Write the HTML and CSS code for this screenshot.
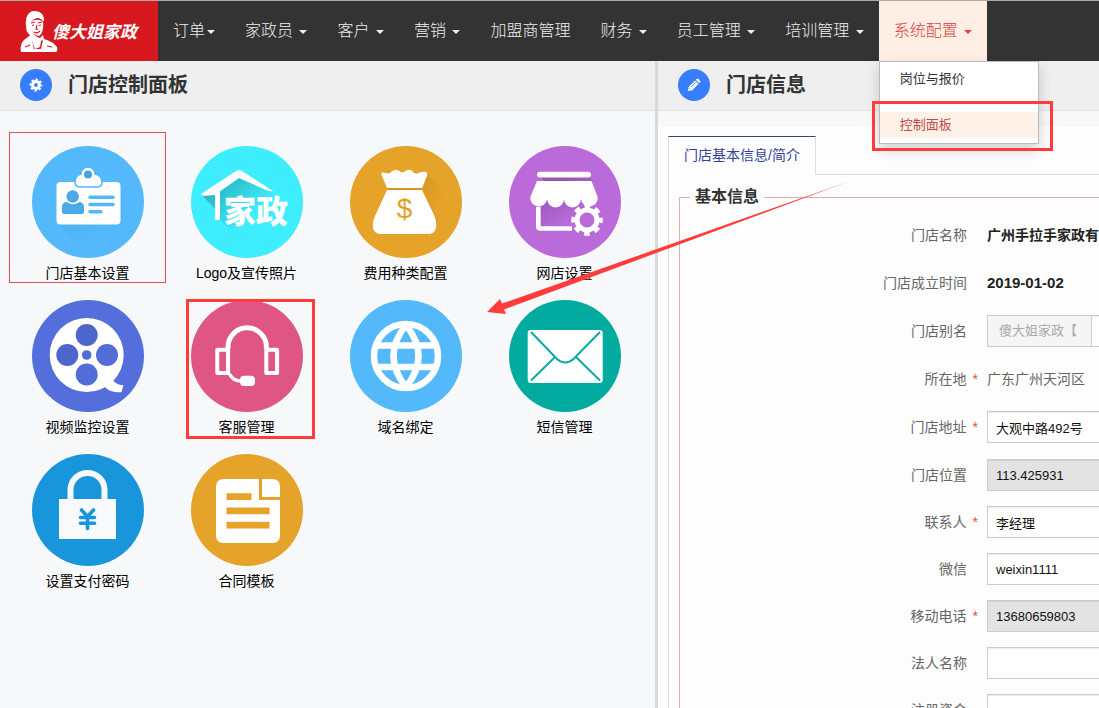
FILE: index.html
```html
<!DOCTYPE html>
<html lang="zh-CN">
<head>
<meta charset="utf-8">
<title>门店控制面板</title>
<link rel="stylesheet" href="styles.css">
</head>
<body>
<header class="navbar">
  <a class="brand" href="#">
    <svg class="brand-face" viewBox="0 0 38 42" aria-hidden="true">
      <path fill="#fff" d="M6 16C5 8 8 1 14 1c6 0 10 3 10 9l-1 2c-1-3-3-4-6-4-3 1-5 2-6 5l1 7c1 4 4 7 8 8l3-3 1 4c5 2 9 3 11 6 3 2 3 6 1 7H1c-1-4 0-9 3-12 2-2 5-3 6-5-3-2-4-5-4-9z"/>
      <path fill="#fff" d="M11 12c3-3 9-3 12 0 1 5 0 11-4 14-4 0-7-4-8-8z"/>
      <path fill="none" stroke="#d7191f" stroke-width="1.2" d="M11 13l4-1M18 13l4-1M12 15.500l2-.5M19 15.500l2-.5M17 15l-1 4 2 .5M14 22q3 2 6-1M24 11q1 5-1 10M5 37l5-2M27 36l5 1"/>
      <path fill="#d7191f" d="M12 30l3 9 5-2 1-6 2-1-2 9h-7z"/>
    </svg>
    <span class="brand-name">傻大姐家政</span>
  </a>
  <nav class="menu">
    <a class="menu-link" href="#">订单<span class="caret"></span></a>
    <a class="menu-link" href="#">家政员 <span class="caret"></span></a>
    <a class="menu-link" href="#">客户 <span class="caret"></span></a>
    <a class="menu-link" href="#">营销 <span class="caret"></span></a>
    <a class="menu-link" href="#">加盟商管理</a>
    <a class="menu-link" href="#">财务 <span class="caret"></span></a>
    <a class="menu-link" href="#">员工管理 <span class="caret"></span></a>
    <a class="menu-link" href="#">培训管理 <span class="caret"></span></a>
    <div class="menu-group">
      <a class="menu-link menu-link-open" href="#">系统配置 <span class="caret"></span></a>
      <div class="dropdown">
        <a class="dropdown-link" href="#">岗位与报价</a>
        <a class="dropdown-link dropdown-link-active" href="#">控制面板</a>
        <span class="mark mark-dropdown"></span>
      </div>
    </div>
  </nav>
</header>

<main class="panels">
  <section class="panel panel-board">
    <header class="panel-head">
      <span class="panel-icon">
        <svg width="14" height="14" viewBox="0 0 14 14" aria-hidden="true">
          <g fill="none" stroke="#fff"><circle cx="7" cy="7" r="3.400" stroke-width="3"/><circle cx="7" cy="7" r="5.200" stroke-width="2.400" stroke-dasharray="2.300 1.784" stroke-dashoffset="1.100"/></g>
        </svg>
      </span>
      <h1 class="panel-title">门店控制面板</h1>
    </header>
    <div class="tiles">
      <a class="tile tile-current" href="#">
        <svg class="tile-icon" viewBox="0 0 112 112" aria-hidden="true">
          <defs><linearGradient id="shade-card" x1="0" y1="0" x2="1" y2="1"><stop offset="0.300" stop-color="#3f9fdc"/><stop offset="0.800" stop-color="#53b9fb"/></linearGradient></defs>
          <circle cx="56" cy="56" r="56" fill="#53b9fb"/>
          <path d="M26 78l20 20 25-19z" fill="url(#shade-card)" opacity=".15"/>
          <rect x="24.500" y="36" width="64" height="42.500" rx="4" fill="#fff"/>
          <path d="M56 21a7 7 0 0 0-7 7c-4 1-6 4-6 8 0 3 2 5 5 5h17c3 0 5-2 5-5 0-4-3-7-7-8a7 7 0 0 0-7-7z" fill="#fff" stroke="#53b9fb" stroke-width="1.600"/>
          <circle cx="56" cy="28.500" r="4" fill="#45a3dd"/>
          <circle cx="40.700" cy="50.500" r="6.200" fill="#4aaae6"/>
          <path d="M30 66v-5c0-3 2-5 5-5 4 3 8 3 12 0 3 0 5 2 5 5v5q0 2-2 2H32q-2 0-2-2z" fill="#4aaae6"/>
          <path d="M58 51.300h23M58 58.500h23M58 65.800h11" stroke="#53b9fb" stroke-width="3.500" stroke-linecap="round"/>
        </svg>
        <span class="tile-label">门店基本设置</span>
      </a>
      <a class="tile" href="#">
        <svg class="tile-icon" viewBox="0 0 112 112" aria-hidden="true">
          <defs><linearGradient id="shade-roof" gradientUnits="userSpaceOnUse" x1="30" y1="35" x2="62" y2="70"><stop offset="0" stop-color="#2bb5c2"/><stop offset="1" stop-color="#3eeeff"/></linearGradient></defs>
          <circle cx="56" cy="56" r="56" fill="#3eeeff"/>
          <path d="M11 49h13v14zM29 46l19-14 34 14-28 50-25-22z" fill="url(#shade-roof)"/>
          <path d="M10 48l35-23q3-2 6 0l31 20q-2 1-7-1L48 32 29 45v29h-5V49l-12 1z" fill="#fff"/>
          <text class="house-text" x="33" y="77">家政</text>
        </svg>
        <span class="tile-label">Logo及宣传照片</span>
      </a>
      <a class="tile" href="#">
        <svg class="tile-icon" viewBox="0 0 112 112" aria-hidden="true">
          <defs><linearGradient id="shade-bag" gradientUnits="userSpaceOnUse" x1="60" y1="40" x2="92" y2="56"><stop offset="0" stop-color="#c98a1c"/><stop offset="1" stop-color="#e5a329"/></linearGradient></defs>
          <circle cx="56" cy="56" r="56" fill="#e5a329"/>
          <path d="M77 28l20 19-10 30-14-33z" fill="url(#shade-bag)" opacity=".6"/>
          <path d="M32 30c-2-4 1-4 4-3 4 2 6-3 9-3 4-1 5 4 9 2 4-3 7-3 9 0 3 3 5 1 8 0 5-1 7 0 6 4l-5 12H37z" fill="#fff"/>
          <path d="M37 44h35l12 25c4 10 3 19-6 19H31c-9 0-10-9-6-18z" fill="#fff"/>
          <path d="M37 43h35" stroke="#c48a20"/>
          <text class="dollar-text" x="54.500" y="72">$</text>
        </svg>
        <span class="tile-label">费用种类配置</span>
      </a>
      <a class="tile" href="#">
        <svg class="tile-icon" viewBox="0 0 112 112" aria-hidden="true">
          <defs><linearGradient id="shade-shop" gradientUnits="userSpaceOnUse" x1="40" y1="40" x2="62" y2="75"><stop offset="0" stop-color="#9455b3"/><stop offset="1" stop-color="#bb6bd9"/></linearGradient></defs>
          <circle cx="56" cy="56" r="56" fill="#bb6bd9"/>
          <path d="M32 31h50l3 10H40zM32 50h50l-18 30H32z" fill="url(#shade-shop)"/>
          <rect x="28" y="25.700" width="54" height="5.800" rx="2.900" fill="#fff"/>
          <path d="M28 35h54.500l6.200 16a8.400 8.400 0 0 1-16.800 2 8.400 8.400 0 0 1-16.900 0 8.400 8.400 0 0 1-16.900 0 8.400 8.400 0 0 1-16.800-2z" fill="#fff"/>
          <path d="M29.300 61v19.500q0 2 2 2H63" fill="none" stroke="#fff" stroke-width="4.600"/>
          <circle cx="78" cy="74" r="10" fill="none" stroke="#fff" stroke-width="5"/>
          <circle cx="78" cy="74" r="13.500" fill="none" stroke="#fff" stroke-width="4.500" stroke-dasharray="5.600 5" stroke-dashoffset="2.800"/>
        </svg>
        <span class="tile-label">网店设置</span>
      </a>
      <a class="tile" href="#">
        <svg class="tile-icon" viewBox="0 0 112 112" aria-hidden="true">
          <circle cx="56" cy="56" r="56" fill="#546fdb"/>
          <circle cx="54.700" cy="55" r="37" fill="#fff"/>
          <path d="M72 86c4 5 10 7 17.500 6l2-7c-5 0-9-2-11-6z" fill="#fff"/>
          <g fill="#4c66cb"><circle cx="54.700" cy="35" r="11"/><circle cx="35.300" cy="55" r="11"/></g>
          <g fill="#526cd8"><circle cx="75" cy="55" r="11"/><circle cx="54.700" cy="74.500" r="11"/><circle cx="54.700" cy="55" r="4.800"/></g>
        </svg>
        <span class="tile-label">视频监控设置</span>
      </a>
      <a class="tile" href="#">
        <svg class="tile-icon" viewBox="0 0 112 112" aria-hidden="true">
          <circle cx="56" cy="56" r="56" fill="#df5584"/>
          <g fill="none" stroke="#fff">
            <path d="M37 49v-2a19.200 19.200 0 0 1 38.400 0v2" stroke-width="5"/>
            <path d="M26.300 49.700h10.800v23.300H26.300zM75.300 49.700h10.800v23.300H75.300z" stroke-width="4" stroke-linejoin="round"/>
            <path d="M38.500 74c2 4 6 7 12 7" stroke-width="3.500"/>
          </g>
          <rect x="49" y="75.700" width="15" height="10.200" rx="4" fill="#fff"/>
        </svg>
        <span class="tile-label">客服管理</span>
        <span class="mark mark-tile"></span>
      </a>
      <a class="tile" href="#">
        <svg class="tile-icon" viewBox="0 0 112 112" aria-hidden="true">
          <circle cx="56" cy="56" r="56" fill="#53b9fb"/>
          <g fill="none" stroke="#fff" stroke-width="6.500">
            <circle cx="56" cy="56" r="32"/>
            <path d="M56 25Q31 56 56 87M56 25Q81 56 56 87M27 45.500h58M27 67h58"/>
          </g>
        </svg>
        <span class="tile-label">域名绑定</span>
      </a>
      <a class="tile" href="#">
        <svg class="tile-icon" viewBox="0 0 112 112" aria-hidden="true">
          <circle cx="56" cy="56" r="56" fill="#01ab9f"/>
          <rect x="18.700" y="30" width="75" height="53" rx="3" fill="#fff"/>
          <path d="M22 32l26 27q8 7 16.500 0L91 32M22 80.500l24-23.500M91 80.500L67 57" fill="none" stroke="#01ab9f" stroke-width="1.900"/>
        </svg>
        <span class="tile-label">短信管理</span>
      </a>
      <a class="tile" href="#">
        <svg class="tile-icon" viewBox="0 0 112 112" aria-hidden="true">
          <circle cx="56" cy="56" r="56" fill="#1996db"/>
          <path d="M27 45h57v40H27z" fill="#f7f9fb"/>
          <path d="M38.500 46V36a17 17 0 0 1 34 0v10" fill="none" stroke="#f7f9fb" stroke-width="6"/>
          <path d="M49.500 56l6 6.500 6-6.500M55.500 62v12.500M48.500 63.500h14M48.500 69.300h14" fill="none" stroke="#1996db" stroke-width="3.600" stroke-linecap="round"/>
        </svg>
        <span class="tile-label">设置支付密码</span>
      </a>
      <a class="tile" href="#">
        <svg class="tile-icon" viewBox="0 0 112 112" aria-hidden="true">
          <circle cx="56" cy="56" r="56" fill="#e5a329"/>
          <rect x="25" y="25" width="64" height="64" rx="7" fill="#fff"/>
          <path d="M35.500 39.300h25V46h-25zM35.500 53.500h43v6.700h-43zM35.500 67.800h43v6.700h-43zM68 25h3v18h18v3H68z" fill="#e5a329"/>
        </svg>
        <span class="tile-label">合同模板</span>
      </a>
    </div>
  </section>

  <section class="panel panel-info">
    <header class="panel-head">
      <span class="panel-icon">
        <svg width="14" height="14" viewBox="0 0 14 14" aria-hidden="true">
          <path d="M1 13l.6-4L8 2.600 11.400 6 5 12.400zM8.800 1.800l.9-.9q.9-.7 1.800.1l1.500 1.500q.8.900.1 1.800l-.9.900z" fill="#fff"/>
          <path d="M1.800 10.500l1.700 1.700M4 9l5-5" stroke="#377dff" stroke-width=".7"/>
        </svg>
      </span>
      <h2 class="panel-title">门店信息</h2>
    </header>
    <div class="sheet">
      <div class="tabs"><a class="tab" href="#">门店基本信息/简介</a></div>
      <form class="tab-body">
        <fieldset class="fields">
          <legend class="legend">基本信息</legend>
          <div class="row"><span class="row-label">门店名称</span><strong class="value">广州手拉手家政有</strong></div>
          <div class="row"><span class="row-label">门店成立时间</span><strong class="value value-date">2019-01-02</strong></div>
          <div class="row"><label class="row-label" for="alias">门店别名</label><div class="input-group"><span class="addon">傻大姐家政【</span><input class="input" id="alias" type="text"></div></div>
          <div class="row"><span class="row-label row-required">所在地</span><span class="value value-plain">广东广州天河区</span></div>
          <div class="row"><label class="row-label row-required" for="address">门店地址</label><input class="input" id="address" type="text" value="大观中路492号"></div>
          <div class="row row-tight"><label class="row-label" for="position">门店位置</label><input class="input" id="position" type="text" value="113.425931" readonly></div>
          <div class="row row-tight"><label class="row-label row-required" for="contact">联系人</label><input class="input" id="contact" type="text" value="李经理"></div>
          <div class="row row-tight"><label class="row-label" for="wechat">微信</label><input class="input" id="wechat" type="text" value="weixin1111"></div>
          <div class="row row-tight"><label class="row-label row-required" for="mobile">移动电话</label><input class="input" id="mobile" type="text" value="13680659803" readonly></div>
          <div class="row row-tight"><label class="row-label" for="legal">法人名称</label><input class="input" id="legal" type="text"></div>
          <div class="row row-tight"><label class="row-label" for="capital">注册资金</label><input class="input" id="capital" type="text"></div>
        </fieldset>
      </form>
    </div>
  </section>
</main>

<svg class="arrow" width="366" height="136" viewBox="0 0 366 136" aria-hidden="true">
  <defs><linearGradient id="arrow-fade" x1="0" x2="1"><stop offset=".85" stop-color="#ff3b3b"/><stop offset="1" stop-color="#ff3b3b" stop-opacity=".5"/></linearGradient></defs>
  <path d="M0 132l13-13 2 4.500L366 0 17 129.500l2 4.500z" fill="url(#arrow-fade)"/>
</svg>
</body>
</html>
```
FILE: styles.css
```css
* { box-sizing: border-box; }

body {
  position: relative;
  display: flex;
  flex-direction: column;
  height: 100vh;
  margin: 0;
  overflow: hidden;
  background: #f7f8fa;
  color: #333;
  font: 14px/20px "Liberation Sans", "Noto Sans CJK SC", sans-serif;
}

a { color: inherit; text-decoration: none; }

/* Top navigation */
.navbar {
  display: flex;
  flex: none;
  border-top: 1px solid #aaa;
  background: #333;
}
.brand {
  display: flex;
  align-items: center;
  flex: none;
  width: 158px;
  padding-left: 20px;
  background: #d7191f;
  color: #fff;
}
.brand-face { width: 38px; height: 42px; margin-right: -6px; }
.brand-name {
  font: italic 700 17px/24px "Noto Sans CJK SC", sans-serif;
}
.menu { display: flex; flex: none; }
.menu-link {
  display: block;
  padding: 0 15px;
  color: #eee;
  font-size: 16px;
  font-weight: 300;
  line-height: 60px;
  white-space: nowrap;
}
.menu-link-open { background: #feeee4; color: #d9413d; }
.caret {
  display: inline-block;
  margin-left: 2px;
  border: 4px solid transparent;
  border-top-color: currentColor;
  border-bottom: 0;
  vertical-align: middle;
}
.menu-group { position: relative; }
.dropdown {
  position: absolute;
  z-index: 5;
  top: 100%;
  left: 0;
  display: flex;
  flex-direction: column;
  gap: 20px;
  width: 160px;
  padding: 4px 0 5px;
  border: 1px solid #bbb;
  background: #fff;
  box-shadow: 0 6px 12px rgba(0, 0, 0, .18);
}
.dropdown-link {
  padding: 0 20px;
  font-size: 13px;
  line-height: 26px;
}
.dropdown-link-active { background: #fef1e8; color: #c24a48; }

/* Highlight frames */
.mark { position: absolute; border: 3px solid #ff3b3b; }
.mark-dropdown { top: 39px; left: -8px; width: 181px; height: 50px; }
.mark-tile { top: 12px; left: 17px; width: 129px; height: 140px; }
.arrow { position: absolute; z-index: 4; top: 180px; left: 487px; }

/* Panels */
.panels { display: flex; flex: 1; min-height: 0; }
.panel { min-width: 0; overflow: hidden; }
.panel-board { flex: 655 1 0; }
.panel-info { flex: 441 1 0; border-left: 3px solid #d9d9d9; }
.panel-head {
  display: flex;
  align-items: center;
  gap: 16px;
  height: 50px;
  padding: 0 20px 1px;
  border-bottom: 1px solid #e2e2e2;
  background: #efefef;
}
.panel-icon {
  display: flex;
  align-items: center;
  justify-content: center;
  width: 32px;
  height: 32px;
  border-radius: 50%;
  background: #377dff;
}
.panel-title { margin: 0; font-size: 20px; line-height: 28px; }

/* Shortcut tiles */
.tiles {
  display: grid;
  grid-template-columns: repeat(auto-fill, 157px);
  gap: 3px 2px;
  padding: 21px 9px;
}
.tile {
  position: relative;
  display: flex;
  flex-direction: column;
  align-items: center;
  gap: 6px;
  padding-top: 13px;
  border: 1px solid transparent;
  color: #000;
}
.tile-current { border-color: #d9534f; }
.tile-icon { width: 112px; height: 112px; }
.tile-label { line-height: 18px; }
.house-text { fill: #fff; font: 900 32px "Noto Sans CJK SC", sans-serif; }
.dollar-text { fill: #e0a028; font: 28px "Liberation Sans", sans-serif; text-anchor: middle; }

/* Store form */
.sheet { margin-top: 15px; padding: 10px 0 0 10px; background: #fdfdfd; }
.tabs { display: flex; border-bottom: 1px solid #ddd; }
.tab {
  margin-bottom: -1px;
  padding: 0 15px;
  border: 1px solid #ddd;
  border-top-color: #303f9f;
  border-bottom-color: #fdfdfd;
  background: #fdfdfd;
  color: #303f9f;
  line-height: 37px;
  white-space: nowrap;
}
.tab-body { padding: 10px 0 10px 10px; border-left: 1px solid #ddd; }
.fields {
  width: 600px;
  margin: 0;
  padding: 10px 0 0;
  border: 1px solid #d6b4b4;
}
.legend {
  margin-left: 10px;
  padding: 0 5px;
  font-size: 16px;
  font-weight: 700;
  line-height: 24px;
}
.row {
  display: grid;
  grid-template-columns: 307px 260px;
  align-items: center;
  height: 32px;
  margin-bottom: 16px;
}
.row-tight { margin-bottom: 15px; }
.row-label { padding-right: 20px; color: #666; text-align: right; }
.row-required { padding-right: 9px; }
.row-required::after { content: "*"; margin-left: 6px; color: #e74c3c; }
.value { color: #222; white-space: nowrap; }
.value-date { font-size: 15px; }
.value-plain { color: #666; }
.input {
  width: 100%;
  height: 32px;
  padding: 0 8px;
  border: 1px solid #ccc;
  border-radius: 0;
  background: #fff;
  box-shadow: inset 0 1px 1px rgba(0, 0, 0, .08);
  color: #111;
  font: 13px "Liberation Sans", "Noto Sans CJK SC", sans-serif;
}
.input:read-only { background: #e3e3e3; }
.input-group { display: flex; }
.addon {
  flex: none;
  width: 104px;
  padding-left: 11px;
  border: 1px solid #ccc;
  border-right: 0;
  background: #f5f5f5;
  color: #aaa;
  font-size: 13px;
  line-height: 30px;
  white-space: nowrap;
}
```
